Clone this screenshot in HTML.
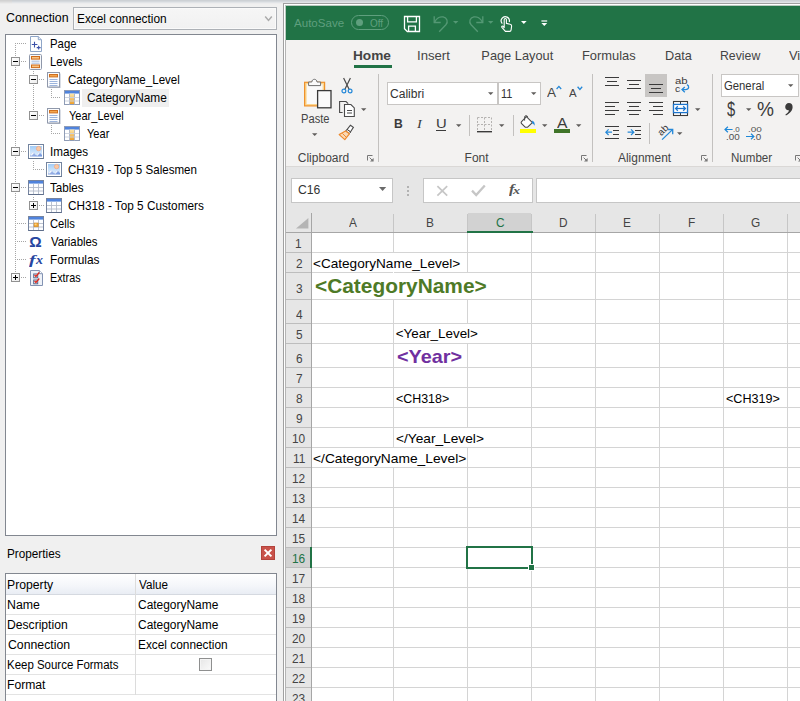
<!DOCTYPE html>
<html lang="en"><head><meta charset="utf-8"><title>Template editor</title>
<style>
html,body{margin:0;padding:0}
body{width:800px;height:701px;position:relative;overflow:hidden;background:#f0f0f0;font-family:"Liberation Sans",sans-serif}
.r{position:absolute;display:block;box-sizing:border-box}
.t{position:absolute;display:block;white-space:nowrap;transform-origin:0 0;font-family:"Liberation Sans",sans-serif}
</style></head><body>
<!-- left panel -->
<div class="r" style="left:0px;top:0px;width:800px;height:1px;background:#cdd1d5;"></div>
<div class="r" style="left:0px;top:0px;width:12px;height:1px;background:#d2d2d2;"></div>
<div class="r" style="left:0px;top:1px;width:800px;height:1px;background:#d5d9dd;"></div>
<div class="r" style="left:0px;top:1px;width:12px;height:1px;background:#d9d9d9;"></div>
<div class="r" style="left:0px;top:2px;width:800px;height:1px;background:#e1e4e7;"></div>
<div class="r" style="left:0px;top:2px;width:12px;height:1px;background:#e2e2e2;"></div>
<div class="r" style="left:0px;top:3px;width:800px;height:1px;background:#ececed;"></div>
<div class="r" style="left:0px;top:3px;width:12px;height:1px;background:#ebebeb;"></div>
<span class="t" style="left:5.67px;top:12px;font-size:12px;line-height:12px;color:#000;transform:scaleX(1.0316);">Connection</span>
<div class="r" style="left:73px;top:7px;width:204px;height:23px;background:linear-gradient(to bottom,#f6f6f6,#f1f1f1);border:1px solid #adb1b6;box-shadow:inset 0 0 0 1px #fafafa"></div>
<span class="t" style="left:76.73px;top:13px;font-size:12px;line-height:12px;color:#000;transform:scaleX(0.9881);">Excel connection</span>
<svg class="r" style="left:264px;top:15px" width="9" height="8" viewBox="0 0 9 8"><path d="M1.2 1.6 L4.5 5.4 L7.8 1.6" fill="none" stroke="#ababab" stroke-width="1.5"/></svg>
<div class="r" style="left:5px;top:34px;width:272px;height:502px;background:#fff;border:1px solid #828790"></div>
<div class="r" style="left:15px;top:43px;width:1px;height:230px;background:repeating-linear-gradient(to bottom,#a6a6a6 0,#a6a6a6 1px,transparent 1px,transparent 2px);"></div>
<div class="r" style="left:15px;top:43px;width:11px;height:1px;background:repeating-linear-gradient(to right,#a6a6a6 0,#a6a6a6 1px,transparent 1px,transparent 2px);"></div>
<div class="r" style="left:21px;top:61px;width:5px;height:1px;background:repeating-linear-gradient(to right,#a6a6a6 0,#a6a6a6 1px,transparent 1px,transparent 2px);"></div>
<div class="r" style="left:21px;top:151px;width:5px;height:1px;background:repeating-linear-gradient(to right,#a6a6a6 0,#a6a6a6 1px,transparent 1px,transparent 2px);"></div>
<div class="r" style="left:21px;top:187px;width:5px;height:1px;background:repeating-linear-gradient(to right,#a6a6a6 0,#a6a6a6 1px,transparent 1px,transparent 2px);"></div>
<div class="r" style="left:21px;top:277px;width:5px;height:1px;background:repeating-linear-gradient(to right,#a6a6a6 0,#a6a6a6 1px,transparent 1px,transparent 2px);"></div>
<div class="r" style="left:15px;top:223px;width:11px;height:1px;background:repeating-linear-gradient(to right,#a6a6a6 0,#a6a6a6 1px,transparent 1px,transparent 2px);"></div>
<div class="r" style="left:15px;top:241px;width:11px;height:1px;background:repeating-linear-gradient(to right,#a6a6a6 0,#a6a6a6 1px,transparent 1px,transparent 2px);"></div>
<div class="r" style="left:15px;top:259px;width:11px;height:1px;background:repeating-linear-gradient(to right,#a6a6a6 0,#a6a6a6 1px,transparent 1px,transparent 2px);"></div>
<div class="r" style="left:33px;top:71px;width:1px;height:40px;background:repeating-linear-gradient(to bottom,#a6a6a6 0,#a6a6a6 1px,transparent 1px,transparent 2px);"></div>
<div class="r" style="left:39px;top:79px;width:5px;height:1px;background:repeating-linear-gradient(to right,#a6a6a6 0,#a6a6a6 1px,transparent 1px,transparent 2px);"></div>
<div class="r" style="left:39px;top:115px;width:5px;height:1px;background:repeating-linear-gradient(to right,#a6a6a6 0,#a6a6a6 1px,transparent 1px,transparent 2px);"></div>
<div class="r" style="left:51px;top:89px;width:1px;height:8px;background:repeating-linear-gradient(to bottom,#a6a6a6 0,#a6a6a6 1px,transparent 1px,transparent 2px);"></div>
<div class="r" style="left:51px;top:97px;width:10px;height:1px;background:repeating-linear-gradient(to right,#a6a6a6 0,#a6a6a6 1px,transparent 1px,transparent 2px);"></div>
<div class="r" style="left:51px;top:125px;width:1px;height:8px;background:repeating-linear-gradient(to bottom,#a6a6a6 0,#a6a6a6 1px,transparent 1px,transparent 2px);"></div>
<div class="r" style="left:51px;top:133px;width:10px;height:1px;background:repeating-linear-gradient(to right,#a6a6a6 0,#a6a6a6 1px,transparent 1px,transparent 2px);"></div>
<div class="r" style="left:33px;top:161px;width:1px;height:8px;background:repeating-linear-gradient(to bottom,#a6a6a6 0,#a6a6a6 1px,transparent 1px,transparent 2px);"></div>
<div class="r" style="left:33px;top:169px;width:11px;height:1px;background:repeating-linear-gradient(to right,#a6a6a6 0,#a6a6a6 1px,transparent 1px,transparent 2px);"></div>
<div class="r" style="left:33px;top:197px;width:1px;height:4px;background:repeating-linear-gradient(to bottom,#a6a6a6 0,#a6a6a6 1px,transparent 1px,transparent 2px);"></div>
<div class="r" style="left:39px;top:205px;width:5px;height:1px;background:repeating-linear-gradient(to right,#a6a6a6 0,#a6a6a6 1px,transparent 1px,transparent 2px);"></div>
<div class="r" style="left:11px;top:57px;width:9px;height:9px;background:linear-gradient(135deg,#fff,#ededed);border:1px solid #919191"></div>
<div class="r" style="left:13px;top:61px;width:5px;height:1px;background:#000;"></div>
<div class="r" style="left:29px;top:75px;width:9px;height:9px;background:linear-gradient(135deg,#fff,#ededed);border:1px solid #919191"></div>
<div class="r" style="left:31px;top:79px;width:5px;height:1px;background:#000;"></div>
<div class="r" style="left:29px;top:111px;width:9px;height:9px;background:linear-gradient(135deg,#fff,#ededed);border:1px solid #919191"></div>
<div class="r" style="left:31px;top:115px;width:5px;height:1px;background:#000;"></div>
<div class="r" style="left:11px;top:147px;width:9px;height:9px;background:linear-gradient(135deg,#fff,#ededed);border:1px solid #919191"></div>
<div class="r" style="left:13px;top:151px;width:5px;height:1px;background:#000;"></div>
<div class="r" style="left:11px;top:183px;width:9px;height:9px;background:linear-gradient(135deg,#fff,#ededed);border:1px solid #919191"></div>
<div class="r" style="left:13px;top:187px;width:5px;height:1px;background:#000;"></div>
<div class="r" style="left:29px;top:201px;width:9px;height:9px;background:linear-gradient(135deg,#fff,#ededed);border:1px solid #919191"></div>
<div class="r" style="left:31px;top:205px;width:5px;height:1px;background:#000;"></div>
<div class="r" style="left:33px;top:203px;width:1px;height:5px;background:#000;"></div>
<div class="r" style="left:11px;top:273px;width:9px;height:9px;background:linear-gradient(135deg,#fff,#ededed);border:1px solid #919191"></div>
<div class="r" style="left:13px;top:277px;width:5px;height:1px;background:#000;"></div>
<div class="r" style="left:15px;top:275px;width:1px;height:5px;background:#000;"></div>
<div class="r" style="left:82px;top:89px;width:87px;height:18px;background:#efefef;"></div>
<svg class="r" style="left:29px;top:36px" width="16" height="16" viewBox="0 0 16 16"><path d="M1.5 .5h7.8l3.2 3.2v11.8h-11z" fill="#fdfefe" stroke="#8fa6c8"/><path d="M9.3 .5v3.2h3.2" fill="#e8eef7" stroke="#8fa6c8"/><path d="M2.800 8.500h5.600M5.500 5.800v5.600" stroke="#3a50a8" stroke-width="1.100"/><path d="M7.700 11.600h3.900M9.650 9.650v3.900" stroke="#3a50a8" stroke-width="1.100"/></svg>
<svg class="r" style="left:29px;top:54px" width="16" height="16" viewBox="0 0 16 16"><rect x=".5" y=".5" width="12" height="15" rx="1" fill="#f7f9fc" stroke="#8f98aa"/><rect x="2.500" y="2.500" width="8" height="2.600" fill="#f8c484" stroke="#d06c1c"/><path d="M2.500 7.200h8M2.500 9.200h8" stroke="#a9bde0"/><rect x="2.500" y="11" width="8" height="2.600" fill="#f8c484" stroke="#d06c1c"/></svg>
<svg class="r" style="left:47px;top:72px" width="16" height="16" viewBox="0 0 16 16"><rect x="1.5" y="1.5" width="12" height="14.5" fill="#b4bccb"/><rect x=".5" y=".5" width="12" height="14.5" fill="#fbfcfe" stroke="#8f98aa"/><rect x="2.5" y="2.5" width="8" height="2.4" fill="#f3a64f" stroke="#cf6f1f"/><path d="M2.5 7.5h8M2.5 9.5h8M2.5 11.5h8M2.5 13.5h8" stroke="#9cb4dc"/></svg>
<svg class="r" style="left:64px;top:90px" width="16" height="16" viewBox="0 0 16 16"><defs><linearGradient id="cg" x1="0" y1="0" x2="0" y2="1"><stop offset="0" stop-color="#fbe6a8"/><stop offset="1" stop-color="#eea02c"/></linearGradient></defs><rect x=".5" y=".5" width="15" height="14" fill="#fff" stroke="#8f9cb6"/><rect x="1" y="1" width="14" height="2.6" fill="#4f83dd"/><rect x="6" y="3.6" width="4.4" height="10.4" fill="url(#cg)"/><path d="M5.5 3.6v10.9M10.5 3.6v10.9" stroke="#b1b9c9"/><path d="M1 7.5h14M1 11h14" stroke="#c9d0dd" stroke-width=".9"/></svg>
<svg class="r" style="left:47px;top:108px" width="16" height="16" viewBox="0 0 16 16"><rect x="1.5" y="1.5" width="12" height="14.5" fill="#b4bccb"/><rect x=".5" y=".5" width="12" height="14.5" fill="#fbfcfe" stroke="#8f98aa"/><rect x="2.5" y="2.5" width="8" height="2.4" fill="#f3a64f" stroke="#cf6f1f"/><path d="M2.5 7.5h8M2.5 9.5h8M2.5 11.5h8M2.5 13.5h8" stroke="#9cb4dc"/></svg>
<svg class="r" style="left:64px;top:126px" width="16" height="16" viewBox="0 0 16 16"><defs><linearGradient id="cg" x1="0" y1="0" x2="0" y2="1"><stop offset="0" stop-color="#fbe6a8"/><stop offset="1" stop-color="#eea02c"/></linearGradient></defs><rect x=".5" y=".5" width="15" height="14" fill="#fff" stroke="#8f9cb6"/><rect x="1" y="1" width="14" height="2.6" fill="#4f83dd"/><rect x="6" y="3.6" width="4.4" height="10.4" fill="url(#cg)"/><path d="M5.5 3.6v10.9M10.5 3.6v10.9" stroke="#b1b9c9"/><path d="M1 7.5h14M1 11h14" stroke="#c9d0dd" stroke-width=".9"/></svg>
<svg class="r" style="left:28px;top:144px" width="16" height="16" viewBox="0 0 16 16"><defs><linearGradient id="ig" x1="0" y1="0" x2="0" y2="1"><stop offset="0" stop-color="#a3cdf7"/><stop offset="1" stop-color="#e6f2fd"/></linearGradient><linearGradient id="mg" x1="0" y1="0" x2="1" y2="1"><stop offset="0" stop-color="#c3d0ee"/><stop offset="1" stop-color="#6a8fdc"/></linearGradient></defs><rect x=".5" y=".5" width="15" height="14" fill="#fff" stroke="#73849f"/><rect x=".5" y="14" width="15" height="1" fill="#66778f"/><rect x="2" y="2" width="12" height="10.6" fill="url(#ig)"/><circle cx="10.6" cy="4.6" r="2.2" fill="#fbc9a4" stroke="#f6a67c" stroke-width=".7"/><path d="M2 12.6 L2 11.400 L5 7.800 L8.200 11.400 L11.200 8 L14 11 L14 12.600z" fill="url(#mg)"/><path d="M2.400 11.200 L5 7.900 L6 9 L3.800 11.600z" fill="#fff" opacity=".9"/><path d="M8.600 11.300 L11.200 8.100 L11.900 8.900 L9.600 11.800z" fill="#fff" opacity=".9"/></svg>
<svg class="r" style="left:46px;top:162px" width="16" height="16" viewBox="0 0 16 16"><defs><linearGradient id="ig" x1="0" y1="0" x2="0" y2="1"><stop offset="0" stop-color="#a3cdf7"/><stop offset="1" stop-color="#e6f2fd"/></linearGradient><linearGradient id="mg" x1="0" y1="0" x2="1" y2="1"><stop offset="0" stop-color="#c3d0ee"/><stop offset="1" stop-color="#6a8fdc"/></linearGradient></defs><rect x=".5" y=".5" width="15" height="14" fill="#fff" stroke="#73849f"/><rect x=".5" y="14" width="15" height="1" fill="#66778f"/><rect x="2" y="2" width="12" height="10.6" fill="url(#ig)"/><circle cx="10.6" cy="4.6" r="2.2" fill="#fbc9a4" stroke="#f6a67c" stroke-width=".7"/><path d="M2 12.6 L2 11.400 L5 7.800 L8.200 11.400 L11.200 8 L14 11 L14 12.600z" fill="url(#mg)"/><path d="M2.400 11.200 L5 7.900 L6 9 L3.800 11.600z" fill="#fff" opacity=".9"/><path d="M8.600 11.300 L11.200 8.100 L11.900 8.900 L9.600 11.800z" fill="#fff" opacity=".9"/></svg>
<svg class="r" style="left:28px;top:180px" width="16" height="16" viewBox="0 0 16 16"><rect x=".5" y=".5" width="15" height="14" fill="#fdfeff" stroke="#76849f"/><rect x=".5" y="14" width="15" height="1" fill="#5f6e8a"/><rect x="1" y="1" width="14" height="2.600" fill="#4f83dd"/><path d="M5.500 3.600v10.400M10.500 3.600v10.400M1 7.500h14M1 11h14" stroke="#b4bccb" stroke-width=".9"/></svg>
<svg class="r" style="left:46px;top:198px" width="16" height="16" viewBox="0 0 16 16"><rect x=".5" y=".5" width="15" height="14" fill="#fdfeff" stroke="#76849f"/><rect x=".5" y="14" width="15" height="1" fill="#5f6e8a"/><rect x="1" y="1" width="14" height="2.600" fill="#4f83dd"/><path d="M5.500 3.600v10.400M10.500 3.600v10.400M1 7.500h14M1 11h14" stroke="#b4bccb" stroke-width=".9"/></svg>
<svg class="r" style="left:28px;top:216px" width="16" height="16" viewBox="0 0 16 16"><rect x=".5" y=".5" width="15" height="14" fill="#fdfeff" stroke="#76849f"/><rect x=".5" y="14" width="15" height="1" fill="#5f6e8a"/><rect x="1" y="1" width="14" height="2.600" fill="#4f83dd"/><path d="M5.500 3.600v10.400M10.500 3.600v10.400M1 7.500h14M1 11h14" stroke="#b4bccb" stroke-width=".9"/><rect x="6" y="7" width="4.200" height="3.800" fill="#f3a72e" stroke="#c98322" stroke-width=".6"/><rect x="6.600" y="7.600" width="2" height="1.600" fill="#fbd58a"/></svg>
<svg class="r" style="left:30px;top:270px" width="16" height="16" viewBox="0 0 16 16"><path d="M.5 .5h8.800l3.200 3.200v11.800h-12z" fill="#eef2f8" stroke="#8393b3"/><path d="M9.300 .5v3.200h3.200" fill="#fff" stroke="#8393b3"/><rect x="3.700" y="4" width="4" height="3.800" fill="#f6f8fb" stroke="#56688c"/><rect x="3.700" y="10" width="4" height="3.800" fill="#f6f8fb" stroke="#56688c"/><path d="M4.600 5l1.300 1.500 3.400-4" fill="none" stroke="#e0281c" stroke-width="1.300"/><path d="M4.600 11l1.300 1.500 3.400-4" fill="none" stroke="#e0281c" stroke-width="1.300"/></svg>
<span class="t" style="left:29.17px;top:234px;font-size:15.5px;line-height:15.5px;color:#2746a0;font-weight:700;">Ω</span>
<span class="t" style="left:29.00px;top:253px;font-size:13.5px;line-height:13.5px;color:#2746a0;transform:scaleX(1.4601);font-weight:700;font-style:italic;font-family:'Liberation Serif',serif;">f</span>
<span class="t" style="left:36.37px;top:253px;font-size:13px;line-height:13px;color:#2746a0;transform:scaleX(1.0723);font-weight:700;font-style:italic;font-family:'Liberation Serif',serif;">x</span>
<span class="t" style="left:49.67px;top:38px;font-size:12.2px;line-height:12.2px;color:#000;transform:scaleX(0.9314);">Page</span>
<span class="t" style="left:49.68px;top:56px;font-size:12.2px;line-height:12.2px;color:#000;transform:scaleX(0.9224);">Levels</span>
<span class="t" style="left:68.41px;top:74px;font-size:12.2px;line-height:12.2px;color:#000;transform:scaleX(0.9489);">CategoryName_Level</span>
<span class="t" style="left:86.50px;top:92px;font-size:12.2px;line-height:12.2px;color:#000;transform:scaleX(0.9742);">CategoryName</span>
<span class="t" style="left:68.76px;top:110px;font-size:12.2px;line-height:12.2px;color:#000;transform:scaleX(0.9039);">Year_Level</span>
<span class="t" style="left:86.86px;top:128px;font-size:12.2px;line-height:12.2px;color:#000;transform:scaleX(0.9057);">Year</span>
<span class="t" style="left:49.53px;top:146px;font-size:12.2px;line-height:12.2px;color:#000;transform:scaleX(0.9547);">Images</span>
<span class="t" style="left:68.41px;top:164px;font-size:12.2px;line-height:12.2px;color:#000;transform:scaleX(0.9482);">CH319 - Top 5 Salesmen</span>
<span class="t" style="left:50.34px;top:182px;font-size:12.2px;line-height:12.2px;color:#000;transform:scaleX(0.9551);">Tables</span>
<span class="t" style="left:68.40px;top:200px;font-size:12.2px;line-height:12.2px;color:#000;transform:scaleX(0.9653);">CH318 - Top 5 Customers</span>
<span class="t" style="left:50.03px;top:218px;font-size:12.2px;line-height:12.2px;color:#000;transform:scaleX(0.9211);">Cells</span>
<span class="t" style="left:50.55px;top:236px;font-size:12.2px;line-height:12.2px;color:#000;transform:scaleX(0.9320);">Variables</span>
<span class="t" style="left:49.62px;top:254px;font-size:12.2px;line-height:12.2px;color:#000;transform:scaleX(0.9757);">Formulas</span>
<span class="t" style="left:49.71px;top:272px;font-size:12.2px;line-height:12.2px;color:#000;transform:scaleX(0.8873);">Extras</span>
<span class="t" style="left:6.54px;top:548px;font-size:12px;line-height:12px;color:#000;transform:scaleX(0.9798);">Properties</span>
<div class="r" style="left:261px;top:546px;width:14px;height:14px;background:#c9524a;border:1px solid #b3423b"></div>
<svg class="r" style="left:261px;top:546px" width="14" height="14" viewBox="0 0 14 14"><path d="M3.6 3.6l6.8 6.8M10.4 3.6l-6.8 6.8" stroke="#fff" stroke-width="2"/></svg>
<div class="r" style="left:5px;top:573px;width:272px;height:130px;background:#fff;border:1px solid #828790;border-bottom:0"></div>
<div class="r" style="left:6px;top:574px;width:270px;height:20px;background:linear-gradient(to bottom,#ffffff 0,#f4f6fa 60%,#e9edf4 100%);"></div>
<div class="r" style="left:6px;top:594px;width:270px;height:1px;background:#d5d9e0;"></div>
<div class="r" style="left:6px;top:614px;width:270px;height:1px;background:#e3e3e3;"></div>
<div class="r" style="left:6px;top:634px;width:270px;height:1px;background:#e3e3e3;"></div>
<div class="r" style="left:6px;top:654px;width:270px;height:1px;background:#e3e3e3;"></div>
<div class="r" style="left:6px;top:674px;width:270px;height:1px;background:#e3e3e3;"></div>
<div class="r" style="left:6px;top:694px;width:270px;height:1px;background:#e3e3e3;"></div>
<div class="r" style="left:135px;top:574px;width:1px;height:121px;background:#dcdcdc;"></div>
<span class="t" style="left:7.30px;top:579px;font-size:12px;line-height:12px;color:#000;transform:scaleX(1.0170);">Property</span>
<span class="t" style="left:138.75px;top:579px;font-size:12px;line-height:12px;color:#000;transform:scaleX(0.9721);">Value</span>
<span class="t" style="left:7.29px;top:599px;font-size:12px;line-height:12px;color:#000;transform:scaleX(1.0265);">Name</span>
<span class="t" style="left:138.19px;top:599px;font-size:12px;line-height:12px;color:#000;transform:scaleX(0.9954);">CategoryName</span>
<span class="t" style="left:7.30px;top:619px;font-size:12px;line-height:12px;color:#000;transform:scaleX(1.0109);">Description</span>
<span class="t" style="left:138.19px;top:619px;font-size:12px;line-height:12px;color:#000;transform:scaleX(0.9954);">CategoryName</span>
<span class="t" style="left:7.68px;top:639px;font-size:12px;line-height:12px;color:#000;transform:scaleX(1.0232);">Connection</span>
<span class="t" style="left:137.83px;top:639px;font-size:12px;line-height:12px;color:#000;transform:scaleX(0.9881);">Excel connection</span>
<span class="t" style="left:7.36px;top:659px;font-size:12px;line-height:12px;color:#000;transform:scaleX(0.9549);">Keep Source Formats</span>
<span class="t" style="left:7.30px;top:679px;font-size:12px;line-height:12px;color:#000;transform:scaleX(1.0126);">Format</span>
<div class="r" style="left:199px;top:658px;width:13px;height:13px;background:linear-gradient(135deg,#e6e6e6,#fafafa);border:1px solid #8e8f8f;box-shadow:inset 0 0 0 1px #f4f4f4"></div>
<!-- excel frame -->
<div class="r" style="left:283px;top:3px;width:517px;height:698px;background:#fff;border-left:1px solid #a0a0a0;border-top:1px solid #a0a0a0"></div>
<div class="r" style="left:285px;top:5px;width:515px;height:35px;background:#b9cbc0;"></div>
<div class="r" style="left:286px;top:6px;width:514px;height:34px;background:#217346;"></div>
<div class="r" style="left:285px;top:40px;width:515px;height:126px;background:#f3f2f1;"></div>
<div class="r" style="left:285px;top:166px;width:515px;height:1px;background:#dad8d6;"></div>
<div class="r" style="left:285px;top:167px;width:515px;height:46px;background:#e6e6e6;"></div>
<div class="r" style="left:285px;top:40px;width:1px;height:661px;background:#b4b4b4;"></div>
<span class="t" style="left:294.38px;top:18px;font-size:11.5px;line-height:11.5px;color:#5f9f7e;transform:scaleX(1.0053);">AutoSave</span>
<div class="r" style="left:351px;top:14.5px;width:37.5px;height:15.5px;background:transparent;border:1px solid #5f9f7e;border-radius:8px"></div>
<div class="r" style="left:356px;top:19px;width:7px;height:7px;background:#5f9f7e;border-radius:50%"></div>
<span class="t" style="left:369.93px;top:18px;font-size:11px;line-height:11px;color:#5f9f7e;transform:scaleX(0.9022);">Off</span>
<svg class="r" style="left:403px;top:15px" width="18" height="18" viewBox="0 0 18 18"><path d="M1.5 1.5h15v15h-12.2l-2.8-2.8z" fill="none" stroke="#fff" stroke-width="1.3"/><path d="M4.6 1.5v5.4h8.8v-5.4" fill="none" stroke="#fff" stroke-width="1.3"/><path d="M5.6 16.5v-5.4h6.8v5.4" fill="none" stroke="#fff" stroke-width="1.3"/></svg>
<svg class="r" style="left:433px;top:15px" width="16" height="18" viewBox="0 0 16 18"><path d="M1.2 1.200v6.300h6.500" fill="none" stroke="#549874" stroke-width="1.300"/><path d="M1.600 7.200C3.400 3.400 7 1.300 10.200 1.900C14 2.700 15.500 6.800 12.900 9.700L6.200 16.800" fill="none" stroke="#549874" stroke-width="1.300"/></svg>
<svg class="r" style="left:453px;top:21px" width="6" height="3" viewBox="0 0 6 3"><path d="M0 0h5.400l-2.700 2.800z" fill="#549874"/></svg>
<svg class="r" style="left:468px;top:15px" width="16" height="18" viewBox="0 0 16 18"><g transform="translate(16 0) scale(-1 1)"><path d="M1.2 1.200v6.300h6.500" fill="none" stroke="#549874" stroke-width="1.300"/><path d="M1.600 7.200C3.400 3.400 7 1.300 10.200 1.900C14 2.700 15.500 6.800 12.900 9.700L6.200 16.800" fill="none" stroke="#549874" stroke-width="1.300"/></g></svg>
<svg class="r" style="left:488px;top:21px" width="6" height="3" viewBox="0 0 6 3"><path d="M0 0h5.400l-2.700 2.800z" fill="#549874"/></svg>
<svg class="r" style="left:500px;top:15px" width="14" height="18" viewBox="0 0 14 18"><path d="M2.300 8.600A4.100 4.100 0 1 1 9.200 7" fill="none" stroke="#fff" stroke-width="1.200"/><path d="M4.200 12.600V4.600a1.100 1.100 0 0 1 2.200 0V8.400l3.800.9c1 .2 1.500.9 1.400 1.900l-.5 3.700c-.1.900-.6 1.500-1.400 1.500h-4.300l-3.500-4.100c-.6-.8.500-1.700 1.200-1z" fill="#217346" stroke="#fff" stroke-width="1.100" stroke-linejoin="round"/></svg>
<svg class="r" style="left:521px;top:21px" width="6" height="4" viewBox="0 0 6 4"><path d="M0 0h5.600l-2.800 3z" fill="#fff"/></svg>
<svg class="r" style="left:541px;top:20px" width="7" height="8" viewBox="0 0 7 8"><path d="M.4 1h5.800" stroke="#fff" stroke-width="1.200"/><path d="M.4 3h5.800l-2.900 3z" fill="#fff"/></svg>
<span class="t" style="left:353.49px;top:50px;font-size:12.8px;line-height:12.8px;color:#444;transform:scaleX(1.0680);font-weight:700;">Home</span>
<div class="r" style="left:354px;top:65px;width:38px;height:3px;background:#217346;"></div>
<span class="t" style="left:417.49px;top:50px;font-size:12.8px;line-height:12.8px;color:#444;transform:scaleX(1.0281);">Insert</span>
<span class="t" style="left:481.35px;top:50px;font-size:12.8px;line-height:12.8px;color:#444;">Page Layout</span>
<span class="t" style="left:582.34px;top:50px;font-size:12.8px;line-height:12.8px;color:#444;transform:scaleX(1.0071);">Formulas</span>
<span class="t" style="left:664.56px;top:50px;font-size:12.8px;line-height:12.8px;color:#444;transform:scaleX(0.9928);">Data</span>
<span class="t" style="left:720.29px;top:50px;font-size:12.8px;line-height:12.8px;color:#444;transform:scaleX(0.9597);">Review</span>
<span class="t" style="left:788.74px;top:50px;font-size:12.8px;line-height:12.8px;color:#444;transform:scaleX(1.0077);">View</span>
<svg class="r" style="left:303px;top:77px" width="30" height="32" viewBox="0 0 30 32"><rect x="1.600" y="5.300" width="20" height="23.600" fill="#fbd690" stroke="#ef922c" stroke-width="1.200"/><rect x="3.600" y="7.200" width="16" height="19.800" fill="#fafafa"/><path d="M5.600 8.600v-3.600h3.200c.2-3.600 5-3.600 5.200 0h3.600v3.600z" fill="#fafafa" stroke="#6f6f6f" stroke-width="1"/><rect x="14.600" y="13.600" width="13.400" height="17.200" fill="#fafafa" stroke="#3a3a3a" stroke-width="1.300"/></svg>
<span class="t" style="left:300.99px;top:113px;font-size:12px;line-height:12px;color:#444;transform:scaleX(0.9291);">Paste</span>
<svg class="r" style="left:312px;top:133px" width="6" height="4" viewBox="0 0 6 4"><path d="M0 .2h5.4l-2.7 2.9z" fill="#605e5c"/></svg>
<svg class="r" style="left:340px;top:77px" width="14" height="17" viewBox="0 0 14 17"><path d="M3.6 1l5.6 11.6M10.4 1l-5.6 11.6" stroke="#4a4a4a" stroke-width="1.2" fill="none"/><circle cx="3.9" cy="14" r="1.9" fill="none" stroke="#2488d8" stroke-width="1.2"/><circle cx="10.1" cy="14" r="1.9" fill="none" stroke="#2488d8" stroke-width="1.2"/></svg>
<svg class="r" style="left:338px;top:100px" width="18" height="18" viewBox="0 0 18 18"><path d="M4.6 12.5h-3v-11h6.4l2.2 2.2" fill="none" stroke="#4a4a4a" stroke-width="1.1"/><path d="M6.5 4.5h6.4l3.4 3.4v8.6h-9.8z" fill="#fff" stroke="#4a4a4a" stroke-width="1.1"/><path d="M9 10.5h5M9 13h5" stroke="#4a4a4a" stroke-width="1"/></svg>
<svg class="r" style="left:361px;top:108px" width="6" height="4" viewBox="0 0 6 4"><path d="M0 .2h5.4l-2.7 2.9z" fill="#605e5c"/></svg>
<svg class="r" style="left:338px;top:124px" width="18" height="17" viewBox="0 0 18 17"><path d="M12.4 1.2l3 2.2-3 4.6-3.4-2.4z" fill="#fff" stroke="#4a4a4a" stroke-width="1.1"/><path d="M9 5.4l3.6 2.6-1.2 1.6-3.6-2.6z" fill="#fff" stroke="#4a4a4a" stroke-width="1"/><path d="M7.6 7l3.8 2.8-4.6 5.8-5.6-5z" fill="#fbd9b5" stroke="#ee8a2e" stroke-width="1.2" stroke-linejoin="round"/><path d="M4.4 9.4l4 4" stroke="#ee8a2e" stroke-width="1"/></svg>
<span class="t" style="left:297.79px;top:152px;font-size:12px;line-height:12px;color:#444;">Clipboard</span>
<svg class="r" style="left:367px;top:155px" width="8" height="7" viewBox="0 0 8 7"><path d="M.5 5.5v-5h5" fill="none" stroke="#777"/><path d="M2.6 2.6l3.4 3.4" stroke="#777"/><path d="M6.6 3v3.6h-3.6z" fill="#777"/></svg>
<div class="r" style="left:378px;top:74px;width:1px;height:88px;background:#c3c1bf;"></div>
<div class="r" style="left:387px;top:82px;width:111px;height:23px;background:#fff;border:1px solid #c8c6c4"></div>
<div class="r" style="left:498px;top:82px;width:43.4px;height:23px;background:#fff;border:1px solid #c8c6c4"></div>
<span class="t" style="left:389.99px;top:88px;font-size:12px;line-height:12px;color:#333;transform:scaleX(1.0064);">Calibri</span>
<svg class="r" style="left:488px;top:92px" width="6" height="4" viewBox="0 0 6 4"><path d="M0 .2h5.4l-2.7 2.9z" fill="#605e5c"/></svg>
<span class="t" style="left:501.17px;top:88px;font-size:12.5px;line-height:12.5px;color:#333;transform:scaleX(0.8762);">11</span>
<svg class="r" style="left:531px;top:92px" width="6" height="4" viewBox="0 0 6 4"><path d="M0 .2h5.4l-2.7 2.9z" fill="#605e5c"/></svg>
<span class="t" style="left:547.37px;top:87px;font-size:12.6px;line-height:12.6px;color:#444;transform:scaleX(1.0772);">A</span>
<svg class="r" style="left:556px;top:85px" width="6" height="5" viewBox="0 0 6 5"><path d="M.6 4l2.3-2.6 2.3 2.6" fill="none" stroke="#2488d8" stroke-width="1.3"/></svg>
<span class="t" style="left:568.98px;top:89px;font-size:10.2px;line-height:10.2px;color:#444;transform:scaleX(1.1237);">A</span>
<svg class="r" style="left:577px;top:86px" width="6" height="5" viewBox="0 0 6 5"><path d="M.6 .8l2.3 2.6 2.3-2.6" fill="none" stroke="#2488d8" stroke-width="1.3"/></svg>
<span class="t" style="left:393.79px;top:118px;font-size:12.6px;line-height:12.6px;color:#3b3b3b;transform:scaleX(0.9630);font-weight:700;">B</span>
<span class="t" style="left:417.46px;top:117px;font-size:13.4px;line-height:13.4px;color:#3b3b3b;transform:scaleX(1.0718);font-style:italic;font-family:'Liberation Serif',serif;">I</span>
<span class="t" style="left:435.76px;top:118px;font-size:12px;line-height:12px;color:#3b3b3b;transform:scaleX(1.2326);">U</span>
<div class="r" style="left:436.4px;top:130px;width:9.6px;height:1px;background:#3b3b3b;"></div>
<svg class="r" style="left:456px;top:124px" width="6" height="4" viewBox="0 0 6 4"><path d="M0 .2h5.4l-2.7 2.9z" fill="#605e5c"/></svg>
<div class="r" style="left:469px;top:115px;width:1px;height:21px;background:#c3c1bf;"></div>
<svg class="r" style="left:476px;top:116px" width="17" height="17" viewBox="0 0 17 17"><path d="M1.5 1.5h14M1.5 8.5h14M1.5 1.5v14M8.5 1.5v14M15.5 1.5v14" fill="none" stroke="#b4b2b0" stroke-width="1" stroke-dasharray="2 1.5"/><path d="M1 15.7h15" stroke="#3b3b3b" stroke-width="1.4"/></svg>
<svg class="r" style="left:499px;top:124px" width="6" height="4" viewBox="0 0 6 4"><path d="M0 .2h5.4l-2.7 2.9z" fill="#605e5c"/></svg>
<div class="r" style="left:512.6px;top:115px;width:1px;height:21px;background:#c3c1bf;"></div>
<svg class="r" style="left:519px;top:115px" width="18" height="14" viewBox="0 0 18 14"><path d="M7.4 1.6l6 6-4.8 4.6h-2.4l-3.6-3.6c-.6-.6-.6-1.4 0-2z" fill="#fff" stroke="#4a4a4a" stroke-width="1.1" stroke-linejoin="round"/><path d="M5.6 5.6v-3.4a1.5 1.5 0 0 1 3 0" fill="none" stroke="#4a4a4a" stroke-width="1"/><path d="M13.4 5.4c1.8 1 2.6 2.8 2.2 5.4-.9-1.6-1.6-2.4-2.8-2.8z" fill="#2488d8"/></svg>
<div class="r" style="left:520px;top:129px;width:16px;height:4px;background:#ffff00;"></div>
<svg class="r" style="left:542px;top:124px" width="6" height="4" viewBox="0 0 6 4"><path d="M0 .2h5.4l-2.7 2.9z" fill="#605e5c"/></svg>
<span class="t" style="left:556.97px;top:116px;font-size:14.2px;line-height:14.2px;color:#3b3b3b;transform:scaleX(1.1045);">A</span>
<div class="r" style="left:554px;top:129px;width:16px;height:4px;background:#3f7428;"></div>
<svg class="r" style="left:576px;top:124px" width="6" height="4" viewBox="0 0 6 4"><path d="M0 .2h5.4l-2.7 2.9z" fill="#605e5c"/></svg>
<span class="t" style="left:464.61px;top:152px;font-size:12px;line-height:12px;color:#444;">Font</span>
<svg class="r" style="left:581px;top:155px" width="8" height="7" viewBox="0 0 8 7"><path d="M.5 5.5v-5h5" fill="none" stroke="#777"/><path d="M2.6 2.6l3.4 3.4" stroke="#777"/><path d="M6.6 3v3.6h-3.6z" fill="#777"/></svg>
<div class="r" style="left:592px;top:74px;width:1px;height:88px;background:#c3c1bf;"></div>
<div class="r" style="left:605px;top:77px;width:14px;height:1px;background:#3b3b3b;"></div>
<div class="r" style="left:607px;top:81px;width:10px;height:1px;background:#3b3b3b;"></div>
<div class="r" style="left:605px;top:85px;width:14px;height:1px;background:#3b3b3b;"></div>
<div class="r" style="left:627px;top:80px;width:14px;height:1px;background:#3b3b3b;"></div>
<div class="r" style="left:629px;top:84px;width:10px;height:1px;background:#3b3b3b;"></div>
<div class="r" style="left:627px;top:88px;width:14px;height:1px;background:#3b3b3b;"></div>
<div class="r" style="left:645px;top:74px;width:22px;height:23px;background:#c8c6c4;"></div>
<div class="r" style="left:649px;top:84px;width:14px;height:1px;background:#3b3b3b;"></div>
<div class="r" style="left:651px;top:88px;width:10px;height:1px;background:#3b3b3b;"></div>
<div class="r" style="left:649px;top:92px;width:14px;height:1px;background:#3b3b3b;"></div>
<span class="t" style="left:674.82px;top:77px;font-size:8.71px;line-height:8.71px;color:#3b3b3b;transform:scaleX(1.3086);">ab</span>
<span class="t" style="left:675.06px;top:84px;font-size:9.67px;line-height:9.67px;color:#3b3b3b;transform:scaleX(1.0819);">c</span>
<svg class="r" style="left:680.6px;top:84.4px" width="9" height="9" viewBox="0 0 9 9"><path d="M6 .6c2.600 1.400 2.200 5-1.400 5h-3.200" fill="none" stroke="#2488d8" stroke-width="1.300"/><path d="M3.800 3l-2.800 2.600 2.800 2.600" fill="none" stroke="#2488d8" stroke-width="1.300"/></svg>
<div class="r" style="left:605px;top:102px;width:14px;height:1px;background:#3b3b3b;"></div>
<div class="r" style="left:605px;top:106px;width:10px;height:1px;background:#3b3b3b;"></div>
<div class="r" style="left:605px;top:110px;width:14px;height:1px;background:#3b3b3b;"></div>
<div class="r" style="left:605px;top:114px;width:10px;height:1px;background:#3b3b3b;"></div>
<div class="r" style="left:627px;top:102px;width:14px;height:1px;background:#3b3b3b;"></div>
<div class="r" style="left:629px;top:106px;width:10px;height:1px;background:#3b3b3b;"></div>
<div class="r" style="left:627px;top:110px;width:14px;height:1px;background:#3b3b3b;"></div>
<div class="r" style="left:629px;top:114px;width:10px;height:1px;background:#3b3b3b;"></div>
<div class="r" style="left:649px;top:102px;width:14px;height:1px;background:#3b3b3b;"></div>
<div class="r" style="left:653px;top:106px;width:10px;height:1px;background:#3b3b3b;"></div>
<div class="r" style="left:649px;top:110px;width:14px;height:1px;background:#3b3b3b;"></div>
<div class="r" style="left:653px;top:114px;width:10px;height:1px;background:#3b3b3b;"></div>
<svg class="r" style="left:672px;top:100px" width="17" height="17" viewBox="0 0 17 17"><rect x="1.500" y="1.500" width="14" height="14" fill="#fff" stroke="#3b3b3b" stroke-width="1.100"/><path d="M8.500 1.500v3M8.500 12.500v3" stroke="#3b3b3b" stroke-width="1"/><rect x="1.500" y="4.400" width="14" height="8.200" fill="#fff" stroke="#1c74cc" stroke-width="1.300"/><path d="M4 8.500h9" stroke="#1c74cc" stroke-width="1.300"/><path d="M5.800 6.300l-2.200 2.200 2.200 2.200M11.200 6.300l2.200 2.200-2.200 2.200" fill="none" stroke="#1c74cc" stroke-width="1.300"/></svg>
<svg class="r" style="left:695px;top:108px" width="6" height="4" viewBox="0 0 6 4"><path d="M0 .2h5.4l-2.7 2.9z" fill="#605e5c"/></svg>
<div class="r" style="left:605px;top:126px;width:14px;height:1px;background:#3b3b3b;"></div>
<div class="r" style="left:613px;top:130px;width:6px;height:1px;background:#3b3b3b;"></div>
<div class="r" style="left:613px;top:134px;width:6px;height:1px;background:#3b3b3b;"></div>
<div class="r" style="left:605px;top:138px;width:14px;height:1px;background:#3b3b3b;"></div>
<svg class="r" style="left:604.6px;top:128.4px" width="8" height="8" viewBox="0 0 8 8"><path d="M7 4.2h-6M3.6 1.4l-2.8 2.8 2.8 2.8" fill="none" stroke="#2488d8" stroke-width="1.2"/></svg>
<div class="r" style="left:627px;top:126px;width:14px;height:1px;background:#3b3b3b;"></div>
<div class="r" style="left:635px;top:130px;width:6px;height:1px;background:#3b3b3b;"></div>
<div class="r" style="left:635px;top:134px;width:6px;height:1px;background:#3b3b3b;"></div>
<div class="r" style="left:627px;top:138px;width:14px;height:1px;background:#3b3b3b;"></div>
<svg class="r" style="left:626.6px;top:128.4px" width="8" height="8" viewBox="0 0 8 8"><path d="M.6 4.2h6M4 1.4l2.8 2.8-2.8 2.8" fill="none" stroke="#2488d8" stroke-width="1.2"/></svg>
<div class="r" style="left:649px;top:123px;width:1px;height:21px;background:#c3c1bf;"></div>
<span class="t" style="left:662.600px;top:130.200px;font-size:9.500px;line-height:9.500px;color:#3b3b3b;transform:translate(-50%,-50%) rotate(-45deg) scaleX(1.050);transform-origin:50% 50%">ab</span>
<svg class="r" style="left:660px;top:127px" width="15" height="15" viewBox="0 0 15 15"><path d="M2.100 12.600l10.400-10" stroke="#2488d8" stroke-width="1.300"/><path d="M8 2.500h4.700v4.700" fill="none" stroke="#2488d8" stroke-width="1.300"/></svg>
<svg class="r" style="left:677px;top:132px" width="6" height="4" viewBox="0 0 6 4"><path d="M0 .2h5.4l-2.7 2.9z" fill="#605e5c"/></svg>
<span class="t" style="left:617.98px;top:152px;font-size:12px;line-height:12px;color:#444;transform:scaleX(0.9953);">Alignment</span>
<svg class="r" style="left:701px;top:155px" width="8" height="7" viewBox="0 0 8 7"><path d="M.5 5.5v-5h5" fill="none" stroke="#777"/><path d="M2.6 2.6l3.4 3.4" stroke="#777"/><path d="M6.6 3v3.6h-3.6z" fill="#777"/></svg>
<div class="r" style="left:712px;top:74px;width:1px;height:88px;background:#c3c1bf;"></div>
<div class="r" style="left:721px;top:74px;width:77.5px;height:23px;background:#fff;border:1px solid #c8c6c4"></div>
<span class="t" style="left:724.03px;top:80px;font-size:12px;line-height:12px;color:#333;transform:scaleX(0.9422);">General</span>
<svg class="r" style="left:788.4px;top:84px" width="6" height="4" viewBox="0 0 6 4"><path d="M0 .2h5.4l-2.7 2.9z" fill="#605e5c"/></svg>
<span class="t" style="left:727.44px;top:100px;font-size:19.39px;line-height:19.39px;color:#3b3b3b;transform:scaleX(0.7596);">$</span>
<svg class="r" style="left:745.9px;top:108px" width="6" height="4" viewBox="0 0 6 4"><path d="M0 .2h5.4l-2.7 2.9z" fill="#605e5c"/></svg>
<span class="t" style="left:757.32px;top:100px;font-size:19.87px;line-height:19.87px;color:#3b3b3b;transform:scaleX(0.9610);">%</span>
<svg class="r" style="left:784px;top:102px" width="10" height="14" viewBox="0 0 10 14"><path d="M4.900 1.100c2.400 0 3.700 1.600 3.700 3.900 0 3.400-2.600 6.600-6.700 8.400l-.5-.9c2.100-1.100 3.400-2.600 3.500-4.200-2.200.3-3.700-1-3.700-3.200 0-2.300 1.500-4 3.700-4z" fill="#3b3b3b"/></svg>
<svg class="r" style="left:724px;top:126px" width="9" height="7" viewBox="0 0 9 7"><path d="M8.600 3.500h-7.400M3.900.7l-2.900 2.800 2.900 2.800" fill="none" stroke="#1e88d8" stroke-width="1.200"/></svg>
<span class="t" style="left:732.57px;top:126px;font-size:8.05px;line-height:8.05px;color:#505050;transform:scaleX(0.9886);">.0</span>
<span class="t" style="left:725.60px;top:133px;font-size:8.47px;line-height:8.47px;color:#505050;transform:scaleX(1.1652);">.00</span>
<span class="t" style="left:747.69px;top:126px;font-size:8.05px;line-height:8.05px;color:#505050;transform:scaleX(1.2424);">.00</span>
<svg class="r" style="left:746px;top:133px" width="9" height="7" viewBox="0 0 9 7"><path d="M0 3.500h7.800M5 .7l2.900 2.800-2.900 2.800" fill="none" stroke="#1e88d8" stroke-width="1.200"/></svg>
<span class="t" style="left:753.40px;top:133px;font-size:8.47px;line-height:8.47px;color:#505050;transform:scaleX(1.1611);">.0</span>
<span class="t" style="left:730.75px;top:152px;font-size:12px;line-height:12px;color:#444;transform:scaleX(0.9639);">Number</span>
<svg class="r" style="left:795px;top:155px" width="8" height="7" viewBox="0 0 8 7"><path d="M.5 5.5v-5h5" fill="none" stroke="#777"/><path d="M2.6 2.6l3.4 3.4" stroke="#777"/><path d="M6.6 3v3.6h-3.6z" fill="#777"/></svg>
<div class="r" style="left:291px;top:178px;width:102px;height:25px;background:#fff;border:1px solid #c6c6c6"></div>
<span class="t" style="left:297.78px;top:184px;font-size:12.5px;line-height:12.5px;color:#333;transform:scaleX(0.9749);">C16</span>
<svg class="r" style="left:379px;top:187px" width="8" height="5" viewBox="0 0 8 5"><path d="M0 0h7.2l-3.600 4z" fill="#6a6a6a"/></svg>
<div class="r" style="left:407px;top:185.5px;width:2px;height:2px;background:#b2b2b2;"></div>
<div class="r" style="left:407px;top:189.5px;width:2px;height:2px;background:#b2b2b2;"></div>
<div class="r" style="left:407px;top:193.5px;width:2px;height:2px;background:#b2b2b2;"></div>
<div class="r" style="left:423px;top:178px;width:110px;height:25px;background:#fff;border:1px solid #c6c6c6"></div>
<svg class="r" style="left:436px;top:184.6px" width="13" height="12" viewBox="0 0 13 12"><path d="M1.400 1.200l9.800 9.400M11.200 1.200l-9.800 9.400" stroke="#c6c6c6" stroke-width="1.700"/></svg>
<svg class="r" style="left:471px;top:184px" width="15" height="13" viewBox="0 0 15 13"><path d="M1 6.600l4.200 4.400 8.600-9.600" fill="none" stroke="#c6c6c6" stroke-width="2.300"/></svg>
<span class="t" style="left:508.70px;top:183px;font-size:12.5px;line-height:12.5px;color:#555;transform:scaleX(1.3077);font-weight:700;font-style:italic;font-family:'Liberation Serif',serif;">f</span>
<span class="t" style="left:513.07px;top:185px;font-size:10.9px;line-height:10.9px;color:#555;transform:scaleX(1.2977);font-weight:700;font-style:italic;font-family:'Liberation Serif',serif;">x</span>
<div class="r" style="left:536px;top:178px;width:270px;height:25px;background:#fff;border:1px solid #c6c6c6"></div>
<!-- grid -->
<div class="r" style="left:286px;top:213px;width:514px;height:19px;background:#e6e6e6;"></div>
<div class="r" style="left:286px;top:232px;width:514px;height:1px;background:#a6a6a6;"></div>
<div class="r" style="left:286px;top:233px;width:25px;height:470px;background:#e6e6e6;"></div>
<div class="r" style="left:311px;top:213px;width:1px;height:490px;background:#a6a6a6;"></div>
<div class="r" style="left:312px;top:233px;width:488px;height:470px;background:#fff;"></div>
<svg class="r" style="left:296px;top:218px" width="13" height="11" viewBox="0 0 13 11"><path d="M12.400 0v10.400h-12.400z" fill="#b5b5b5"/></svg>
<div class="r" style="left:393px;top:214px;width:1px;height:18px;background:#c6c6c6;"></div>
<div class="r" style="left:393px;top:233px;width:1px;height:470px;background:#d4d4d4;"></div>
<div class="r" style="left:467px;top:214px;width:1px;height:18px;background:#c6c6c6;"></div>
<div class="r" style="left:467px;top:233px;width:1px;height:470px;background:#d4d4d4;"></div>
<div class="r" style="left:531px;top:214px;width:1px;height:18px;background:#c6c6c6;"></div>
<div class="r" style="left:531px;top:233px;width:1px;height:470px;background:#d4d4d4;"></div>
<div class="r" style="left:595px;top:214px;width:1px;height:18px;background:#c6c6c6;"></div>
<div class="r" style="left:595px;top:233px;width:1px;height:470px;background:#d4d4d4;"></div>
<div class="r" style="left:659px;top:214px;width:1px;height:18px;background:#c6c6c6;"></div>
<div class="r" style="left:659px;top:233px;width:1px;height:470px;background:#d4d4d4;"></div>
<div class="r" style="left:723px;top:214px;width:1px;height:18px;background:#c6c6c6;"></div>
<div class="r" style="left:723px;top:233px;width:1px;height:470px;background:#d4d4d4;"></div>
<div class="r" style="left:787px;top:214px;width:1px;height:18px;background:#c6c6c6;"></div>
<div class="r" style="left:787px;top:233px;width:1px;height:470px;background:#d4d4d4;"></div>
<div class="r" style="left:286px;top:252px;width:25px;height:1px;background:#bdbdbd;"></div>
<div class="r" style="left:312px;top:252px;width:488px;height:1px;background:#d4d4d4;"></div>
<div class="r" style="left:286px;top:272px;width:25px;height:1px;background:#bdbdbd;"></div>
<div class="r" style="left:312px;top:272px;width:488px;height:1px;background:#d4d4d4;"></div>
<div class="r" style="left:286px;top:299px;width:25px;height:1px;background:#bdbdbd;"></div>
<div class="r" style="left:312px;top:299px;width:488px;height:1px;background:#d4d4d4;"></div>
<div class="r" style="left:286px;top:323px;width:25px;height:1px;background:#bdbdbd;"></div>
<div class="r" style="left:312px;top:323px;width:488px;height:1px;background:#d4d4d4;"></div>
<div class="r" style="left:286px;top:343px;width:25px;height:1px;background:#bdbdbd;"></div>
<div class="r" style="left:312px;top:343px;width:488px;height:1px;background:#d4d4d4;"></div>
<div class="r" style="left:286px;top:367px;width:25px;height:1px;background:#bdbdbd;"></div>
<div class="r" style="left:312px;top:367px;width:488px;height:1px;background:#d4d4d4;"></div>
<div class="r" style="left:286px;top:387px;width:25px;height:1px;background:#bdbdbd;"></div>
<div class="r" style="left:312px;top:387px;width:488px;height:1px;background:#d4d4d4;"></div>
<div class="r" style="left:286px;top:407px;width:25px;height:1px;background:#bdbdbd;"></div>
<div class="r" style="left:312px;top:407px;width:488px;height:1px;background:#d4d4d4;"></div>
<div class="r" style="left:286px;top:427px;width:25px;height:1px;background:#bdbdbd;"></div>
<div class="r" style="left:312px;top:427px;width:488px;height:1px;background:#d4d4d4;"></div>
<div class="r" style="left:286px;top:447px;width:25px;height:1px;background:#bdbdbd;"></div>
<div class="r" style="left:312px;top:447px;width:488px;height:1px;background:#d4d4d4;"></div>
<div class="r" style="left:286px;top:467px;width:25px;height:1px;background:#bdbdbd;"></div>
<div class="r" style="left:312px;top:467px;width:488px;height:1px;background:#d4d4d4;"></div>
<div class="r" style="left:286px;top:487px;width:25px;height:1px;background:#bdbdbd;"></div>
<div class="r" style="left:312px;top:487px;width:488px;height:1px;background:#d4d4d4;"></div>
<div class="r" style="left:286px;top:507px;width:25px;height:1px;background:#bdbdbd;"></div>
<div class="r" style="left:312px;top:507px;width:488px;height:1px;background:#d4d4d4;"></div>
<div class="r" style="left:286px;top:527px;width:25px;height:1px;background:#bdbdbd;"></div>
<div class="r" style="left:312px;top:527px;width:488px;height:1px;background:#d4d4d4;"></div>
<div class="r" style="left:286px;top:547px;width:25px;height:1px;background:#bdbdbd;"></div>
<div class="r" style="left:312px;top:547px;width:488px;height:1px;background:#d4d4d4;"></div>
<div class="r" style="left:286px;top:567px;width:25px;height:1px;background:#bdbdbd;"></div>
<div class="r" style="left:312px;top:567px;width:488px;height:1px;background:#d4d4d4;"></div>
<div class="r" style="left:286px;top:587px;width:25px;height:1px;background:#bdbdbd;"></div>
<div class="r" style="left:312px;top:587px;width:488px;height:1px;background:#d4d4d4;"></div>
<div class="r" style="left:286px;top:607px;width:25px;height:1px;background:#bdbdbd;"></div>
<div class="r" style="left:312px;top:607px;width:488px;height:1px;background:#d4d4d4;"></div>
<div class="r" style="left:286px;top:627px;width:25px;height:1px;background:#bdbdbd;"></div>
<div class="r" style="left:312px;top:627px;width:488px;height:1px;background:#d4d4d4;"></div>
<div class="r" style="left:286px;top:647px;width:25px;height:1px;background:#bdbdbd;"></div>
<div class="r" style="left:312px;top:647px;width:488px;height:1px;background:#d4d4d4;"></div>
<div class="r" style="left:286px;top:667px;width:25px;height:1px;background:#bdbdbd;"></div>
<div class="r" style="left:312px;top:667px;width:488px;height:1px;background:#d4d4d4;"></div>
<div class="r" style="left:286px;top:687px;width:25px;height:1px;background:#bdbdbd;"></div>
<div class="r" style="left:312px;top:687px;width:488px;height:1px;background:#d4d4d4;"></div>
<div class="r" style="left:286px;top:707px;width:25px;height:1px;background:#bdbdbd;"></div>
<div class="r" style="left:312px;top:707px;width:488px;height:1px;background:#d4d4d4;"></div>
<div class="r" style="left:393px;top:253px;width:1px;height:46px;background:#fff;"></div>
<div class="r" style="left:393px;top:448px;width:1px;height:19px;background:#fff;"></div>
<div class="r" style="left:467px;top:273px;width:1px;height:26px;background:#fff;"></div>
<div class="r" style="left:467px;top:324px;width:1px;height:19px;background:#fff;"></div>
<div class="r" style="left:467px;top:428px;width:1px;height:19px;background:#fff;"></div>
<div class="r" style="left:468px;top:213px;width:63px;height:18px;background:#d2d2d2;"></div>
<div class="r" style="left:467px;top:231px;width:66px;height:2px;background:#217346;"></div>
<div class="r" style="left:286px;top:548px;width:24px;height:19px;background:#d2d2d2;"></div>
<div class="r" style="left:310px;top:547px;width:2px;height:21px;background:#217346;"></div>
<span class="t" style="left:349.04px;top:217px;font-size:12.5px;line-height:12.5px;color:#444;transform:scaleX(0.9500);">A</span>
<span class="t" style="left:426.27px;top:217px;font-size:12.5px;line-height:12.5px;color:#444;transform:scaleX(0.9500);">B</span>
<span class="t" style="left:495.64px;top:217px;font-size:12.5px;line-height:12.5px;color:#217346;transform:scaleX(0.9500);">C</span>
<span class="t" style="left:559.01px;top:217px;font-size:12.5px;line-height:12.5px;color:#444;transform:scaleX(0.9500);">D</span>
<span class="t" style="left:623.31px;top:217px;font-size:12.5px;line-height:12.5px;color:#444;transform:scaleX(0.9500);">E</span>
<span class="t" style="left:687.62px;top:217px;font-size:12.5px;line-height:12.5px;color:#444;transform:scaleX(0.9500);">F</span>
<span class="t" style="left:751.03px;top:217px;font-size:12.5px;line-height:12.5px;color:#444;transform:scaleX(0.9500);">G</span>
<span class="t" style="left:295.44px;top:238px;font-size:12.5px;line-height:12.5px;color:#444;transform:scaleX(0.9500);">1</span>
<span class="t" style="left:295.60px;top:258px;font-size:12.5px;line-height:12.5px;color:#444;transform:scaleX(0.9500);">2</span>
<span class="t" style="left:295.63px;top:283px;font-size:12.5px;line-height:12.5px;color:#444;transform:scaleX(0.9500);">3</span>
<span class="t" style="left:295.64px;top:309px;font-size:12.5px;line-height:12.5px;color:#444;transform:scaleX(0.9500);">4</span>
<span class="t" style="left:295.61px;top:329px;font-size:12.5px;line-height:12.5px;color:#444;transform:scaleX(0.9500);">5</span>
<span class="t" style="left:295.56px;top:353px;font-size:12.5px;line-height:12.5px;color:#444;transform:scaleX(0.9500);">6</span>
<span class="t" style="left:295.59px;top:373px;font-size:12.5px;line-height:12.5px;color:#444;transform:scaleX(0.9500);">7</span>
<span class="t" style="left:295.60px;top:393px;font-size:12.5px;line-height:12.5px;color:#444;transform:scaleX(0.9500);">8</span>
<span class="t" style="left:295.60px;top:413px;font-size:12.5px;line-height:12.5px;color:#444;transform:scaleX(0.9500);">9</span>
<span class="t" style="left:292.08px;top:433px;font-size:12.5px;line-height:12.5px;color:#444;transform:scaleX(0.9500);">10</span>
<span class="t" style="left:292.57px;top:453px;font-size:12.5px;line-height:12.5px;color:#444;transform:scaleX(0.9500);">11</span>
<span class="t" style="left:292.14px;top:473px;font-size:12.5px;line-height:12.5px;color:#444;transform:scaleX(0.9500);">12</span>
<span class="t" style="left:292.10px;top:493px;font-size:12.5px;line-height:12.5px;color:#444;transform:scaleX(0.9500);">13</span>
<span class="t" style="left:292.02px;top:513px;font-size:12.5px;line-height:12.5px;color:#444;transform:scaleX(0.9500);">14</span>
<span class="t" style="left:292.09px;top:533px;font-size:12.5px;line-height:12.5px;color:#444;transform:scaleX(0.9500);">15</span>
<span class="t" style="left:292.10px;top:553px;font-size:12.5px;line-height:12.5px;color:#217346;transform:scaleX(0.9500);">16</span>
<span class="t" style="left:292.14px;top:573px;font-size:12.5px;line-height:12.5px;color:#444;transform:scaleX(0.9500);">17</span>
<span class="t" style="left:292.10px;top:593px;font-size:12.5px;line-height:12.5px;color:#444;transform:scaleX(0.9500);">18</span>
<span class="t" style="left:292.12px;top:613px;font-size:12.5px;line-height:12.5px;color:#444;transform:scaleX(0.9500);">19</span>
<span class="t" style="left:292.23px;top:633px;font-size:12.5px;line-height:12.5px;color:#444;transform:scaleX(0.9500);">20</span>
<span class="t" style="left:292.29px;top:653px;font-size:12.5px;line-height:12.5px;color:#444;transform:scaleX(0.9500);">21</span>
<span class="t" style="left:292.30px;top:673px;font-size:12.5px;line-height:12.5px;color:#444;transform:scaleX(0.9500);">22</span>
<span class="t" style="left:292.26px;top:693px;font-size:12.5px;line-height:12.5px;color:#444;transform:scaleX(0.9500);">23</span>
<span class="t" style="left:313.33px;top:257px;font-size:13.4px;line-height:13.4px;color:#000;transform:scaleX(1.0143);">&lt;CategoryName_Level&gt;</span>
<span class="t" style="left:315.12px;top:277px;font-size:19.6px;line-height:19.6px;color:#4e7a27;transform:scaleX(1.0651);font-weight:700;">&lt;CategoryName&gt;</span>
<span class="t" style="left:395.74px;top:327px;font-size:13.4px;line-height:13.4px;color:#000;">&lt;Year_Level&gt;</span>
<span class="t" style="left:396.97px;top:347px;font-size:19px;line-height:19px;color:#7030a0;transform:scaleX(1.0432);font-weight:700;">&lt;Year&gt;</span>
<span class="t" style="left:395.79px;top:392px;font-size:13.4px;line-height:13.4px;color:#000;transform:scaleX(0.9278);">&lt;CH318&gt;</span>
<span class="t" style="left:725.78px;top:392px;font-size:13.4px;line-height:13.4px;color:#000;transform:scaleX(0.9385);">&lt;CH319&gt;</span>
<span class="t" style="left:395.72px;top:432px;font-size:13.4px;line-height:13.4px;color:#000;transform:scaleX(1.0234);">&lt;/Year_Level&gt;</span>
<span class="t" style="left:313.32px;top:452px;font-size:13.4px;line-height:13.4px;color:#000;transform:scaleX(1.0294);">&lt;/CategoryName_Level&gt;</span>
<div class="r" style="left:466px;top:546px;width:67px;height:23px;background:transparent;border:2px solid #217346"></div>
<div class="r" style="left:527.5px;top:564px;width:7px;height:7px;background:#fff;"></div>
<div class="r" style="left:528.6px;top:565px;width:5px;height:5px;background:#217346;"></div>
</body></html>
